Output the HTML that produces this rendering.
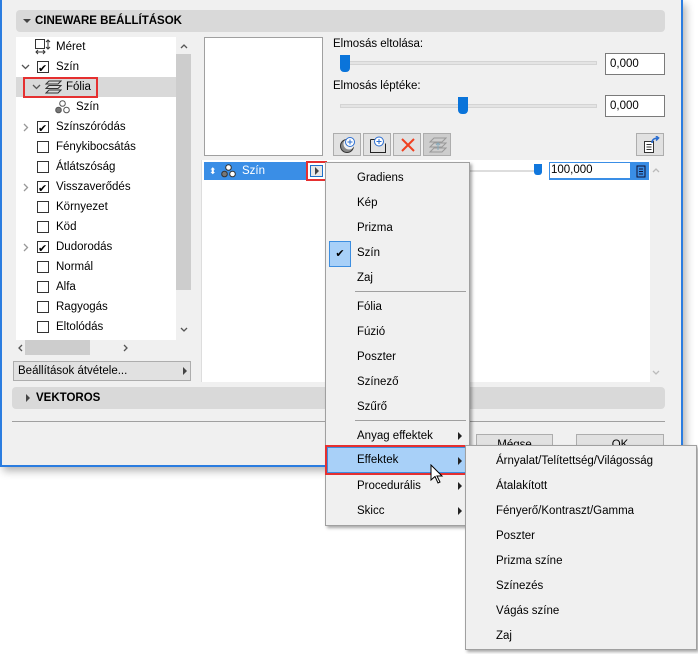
<!DOCTYPE html>
<html><head><meta charset="utf-8"><style>
*{box-sizing:border-box;margin:0;padding:0}
body{width:698px;height:654px;background:#fff;font-family:"Liberation Sans",sans-serif;font-size:11.5px;color:#000;position:relative;overflow:hidden}
.a{position:absolute}
.dlg{left:0;top:0;width:683px;height:467px;background:#f0f0f0;border:2px solid #2b7de0;border-top:none;box-shadow:3px 4px 8px rgba(0,0,0,.3)}
.bar{background:#d9d9d9;border-radius:4px;font-weight:bold;font-size:11.5px}
.tri-d{width:0;height:0;border-left:4px solid transparent;border-right:4px solid transparent;border-top:4px solid #444}
.tri-r{width:0;height:0;border-top:4px solid transparent;border-bottom:4px solid transparent;border-left:4px solid #444}
.cb{width:12px;height:12px;border:1px solid #333;background:#fff}
.cb.c::after{content:"✔";position:absolute;left:0px;top:-3px;font-size:11px}
.row{position:absolute;left:0;width:160px;height:20px;line-height:20px}
.inp{background:#fff;border:1px solid #7a7a7a;height:22px;line-height:20px;padding-left:4px}
.btn{background:#e1e1e1;border:1px solid #adadad}
.menu{background:#f0f0f0;border:1px solid #a0a0a0;box-shadow:2px 2px 3px rgba(0,0,0,.35)}
.mi{position:absolute;height:25px;line-height:25px}
.sep{position:absolute;height:1px;background:#a0a0a0}
.arr{position:absolute;width:0;height:0;border-top:4px solid transparent;border-bottom:4px solid transparent;border-left:4px solid #222}
svg{position:absolute}
</style></head><body>
<div class="a dlg"></div>
<div class="a bar" style="left:16px;top:10px;width:649px;height:22px;line-height:22px;padding-left:19px">CINEWARE BEÁLLÍTÁSOK</div>
<div class="a tri-d" style="left:23px;top:19px"></div>

<!-- tree -->
<div class="a" style="left:16px;top:37px;width:160px;height:303px;background:#fff;overflow:hidden">
 <div class="a" style="left:0;top:40px;width:160px;height:20px;background:#d9d9d9"></div>
 <div class="row" style="top:0"><svg style="left:19px;top:2px" width="16" height="16" viewBox="0 0 16 16"><rect x="0.5" y="0.5" width="9" height="9" fill="none" stroke="#333"/><path d="M13 1v9M11 3l2-2 2 2M11 8l2 2 2-2M1 13h9M3 11l-2 2 2 2M8 11l2 2-2 2" fill="none" stroke="#333"/></svg><span class="a" style="left:40px">Méret</span></div>
 <div class="row" style="top:20px"><svg style="left:5px;top:7px" width="9" height="6"><path d="M1 1l3.5 3.5L8 1" fill="none" stroke="#555" stroke-width="1.3"/></svg><span class="a cb c" style="left:21px;top:4px"></span><span class="a" style="left:40px">Szín</span></div>
 <div class="row" style="top:40px"><svg style="left:16px;top:7px" width="9" height="6"><path d="M1 1l3.5 3.5L8 1" fill="none" stroke="#555" stroke-width="1.3"/></svg><svg style="left:29px;top:3px" width="17" height="14" viewBox="0 0 17 14"><path d="M4 1h12l-3 3H1zM4 5.5h12l-3 3H1zM4 10h12l-3 3H1z" fill="none" stroke="#333"/></svg><span class="a" style="left:50px">Fólia</span></div>
 <div class="row" style="top:60px"><svg style="left:39px;top:3px" width="15" height="14" viewBox="0 0 15 14"><circle cx="7.5" cy="3.5" r="2.8" fill="#fff" stroke="#555"/><circle cx="3.5" cy="10" r="2.8" fill="#777" stroke="#555"/><circle cx="11.5" cy="10" r="2.8" fill="#fff" stroke="#555"/></svg><span class="a" style="left:60px">Szín</span></div>
 <div class="row" style="top:80px"><svg style="left:7px;top:6px" width="6" height="9"><path d="M1 1l3.5 3.5L1 8" fill="none" stroke="#999" stroke-width="1.3"/></svg><span class="a cb c" style="left:21px;top:4px"></span><span class="a" style="left:40px">Színszóródás</span></div>
 <div class="row" style="top:100px"><span class="a cb" style="left:21px;top:4px"></span><span class="a" style="left:40px">Fénykibocsátás</span></div>
 <div class="row" style="top:120px"><span class="a cb" style="left:21px;top:4px"></span><span class="a" style="left:40px">Átlátszóság</span></div>
 <div class="row" style="top:140px"><svg style="left:7px;top:6px" width="6" height="9"><path d="M1 1l3.5 3.5L1 8" fill="none" stroke="#999" stroke-width="1.3"/></svg><span class="a cb c" style="left:21px;top:4px"></span><span class="a" style="left:40px">Visszaverődés</span></div>
 <div class="row" style="top:160px"><span class="a cb" style="left:21px;top:4px"></span><span class="a" style="left:40px">Környezet</span></div>
 <div class="row" style="top:180px"><span class="a cb" style="left:21px;top:4px"></span><span class="a" style="left:40px">Köd</span></div>
 <div class="row" style="top:200px"><svg style="left:7px;top:6px" width="6" height="9"><path d="M1 1l3.5 3.5L1 8" fill="none" stroke="#999" stroke-width="1.3"/></svg><span class="a cb c" style="left:21px;top:4px"></span><span class="a" style="left:40px">Dudorodás</span></div>
 <div class="row" style="top:220px"><span class="a cb" style="left:21px;top:4px"></span><span class="a" style="left:40px">Normál</span></div>
 <div class="row" style="top:240px"><span class="a cb" style="left:21px;top:4px"></span><span class="a" style="left:40px">Alfa</span></div>
 <div class="row" style="top:260px"><span class="a cb" style="left:21px;top:4px"></span><span class="a" style="left:40px">Ragyogás</span></div>
 <div class="row" style="top:280px"><span class="a cb" style="left:21px;top:4px"></span><span class="a" style="left:40px">Eltolódás</span></div>
</div>
<div class="a" style="left:23px;top:77px;width:75px;height:21px;border:2px solid #e53030"></div>
<div class="a" style="left:176px;top:37px;width:15px;height:303px;background:#f0f0f0"></div>
<div class="a" style="left:176px;top:54px;width:15px;height:236px;background:#cdcdcd"></div>
<svg style="left:180px;top:43px" width="8" height="6"><path d="M1 5l3-3 3 3" fill="none" stroke="#555" stroke-width="1.3"/></svg>
<svg style="left:180px;top:327px" width="8" height="6"><path d="M1 1l3 3 3-3" fill="none" stroke="#555" stroke-width="1.3"/></svg>
<div class="a" style="left:16px;top:340px;width:160px;height:15px;background:#f0f0f0"></div>
<div class="a" style="left:25px;top:340px;width:65px;height:15px;background:#cdcdcd"></div>
<svg style="left:17px;top:344px" width="6" height="8"><path d="M5 1l-3 3 3 3" fill="none" stroke="#555" stroke-width="1.3"/></svg>
<svg style="left:123px;top:344px" width="6" height="8"><path d="M1 1l3 3-3 3" fill="none" stroke="#555" stroke-width="1.3"/></svg>
<div class="a btn" style="left:13px;top:361px;width:178px;height:20px;line-height:18px;padding-left:4px">Beállítások átvétele...</div>
<div class="a tri-r" style="left:183px;top:367px"></div>

<!-- preview & list -->
<div class="a" style="left:204px;top:37px;width:119px;height:119px;background:#fff;border:1px solid #a0a0a0"></div>
<div class="a" style="left:201px;top:160px;width:449px;height:222px;background:#fff;border-left:1px solid #ddd"></div>
<div class="a" style="left:204px;top:162px;width:122px;height:18px;background:#3a8ee6;color:#fff;line-height:18px"><span class="a" style="left:5px;font-size:9px">⬍</span><svg style="left:17px;top:2px" width="15" height="14" viewBox="0 0 15 14"><circle cx="7.5" cy="3.5" r="2.8" fill="#fff" stroke="#333"/><circle cx="3.5" cy="10" r="2.8" fill="#777" stroke="#333"/><circle cx="11.5" cy="10" r="2.8" fill="#fff" stroke="#333"/></svg><span class="a" style="left:38px">Szín</span></div>
<div class="a" style="left:306px;top:161px;width:21px;height:20px;border:2px solid #e53030;background:#fff"><div class="a" style="left:2px;top:2px;width:13px;height:12px;border:1px solid #1e6fc8;background:#e8e8e8"></div><div class="arr" style="left:7px;top:4px;border-left-color:#444"></div></div>
<div class="a" style="left:470px;top:170px;width:70px;height:2px;background:#ddd"></div>
<div class="a" style="left:534px;top:164px;width:8px;height:11px;background:#1177dd;border-radius:0 0 3px 3px"></div>
<div class="a" style="left:549px;top:162px;width:100px;height:18px;background:#3a8ee6"></div>
<div class="a" style="left:550px;top:163px;width:80px;height:15px;background:#fff;line-height:15px;padding-left:1px">100,000</div>
<svg style="left:633px;top:163px" width="14" height="15" viewBox="0 0 14 15"><rect x="4" y="3" width="8" height="11" fill="none" stroke="#113"/><path d="M6 6h4M6 8.5h4M6 11h4" stroke="#113"/></svg>
<svg style="left:652px;top:167px" width="8" height="6"><path d="M1 5l3-3 3 3" fill="none" stroke="#bbb" stroke-width="1.3"/></svg>
<svg style="left:652px;top:370px" width="8" height="6"><path d="M1 1l3 3 3-3" fill="none" stroke="#bbb" stroke-width="1.3"/></svg>

<div class="a" style="left:333px;top:38px">Elmosás eltolása:</div>
<div class="a" style="left:340px;top:61px;width:257px;height:4px;background:#e4e4e4;border:1px solid #d4d4d4"></div>
<div class="a" style="left:340px;top:55px;width:10px;height:17px;background:#0a74da;border-radius:0 0 4px 4px"></div>
<div class="a inp" style="left:605px;top:53px;width:60px">0,000</div>
<div class="a" style="left:333px;top:80px">Elmosás léptéke:</div>
<div class="a" style="left:340px;top:104px;width:257px;height:4px;background:#e4e4e4;border:1px solid #d4d4d4"></div>
<div class="a" style="left:458px;top:97px;width:10px;height:17px;background:#0a74da;border-radius:0 0 4px 4px"></div>
<div class="a inp" style="left:605px;top:95px;width:60px">0,000</div>

<div class="a btn" style="left:333px;top:133px;width:28px;height:23px"><svg style="left:5px;top:2px" width="18" height="18" viewBox="0 0 18 18"><circle cx="8" cy="10" r="6.5" fill="#888" stroke="#333"/><circle cx="10" cy="8" r="5.5" fill="#f0f0f0"/><circle cx="11" cy="6" r="4.5" fill="#fff" stroke="#2a6dd0"/><path d="M11 3.5v5M8.5 6h5" stroke="#2a6dd0"/></svg></div>
<div class="a btn" style="left:363px;top:133px;width:28px;height:23px"><svg style="left:5px;top:2px" width="18" height="18" viewBox="0 0 18 18"><path d="M1.5 3.5v13h15v-9" fill="none" stroke="#222"/><path d="M1.5 3.5h4" stroke="#222"/><circle cx="10" cy="5.5" r="4.5" fill="#fff" stroke="#2a6dd0"/><path d="M10 3v5M7.5 5.5h5" stroke="#2a6dd0"/></svg></div>
<div class="a btn" style="left:393px;top:133px;width:28px;height:23px"><svg style="left:7px;top:4px" width="14" height="14" viewBox="0 0 14 14"><path d="M1 1l12 12M13 1L1 13" stroke="#f04020" stroke-width="2"/></svg></div>
<div class="a btn" style="left:423px;top:133px;width:28px;height:23px;background:#cdcdcd"><svg style="left:5px;top:3px" width="18" height="16" viewBox="0 0 18 16"><path d="M5 1h12l-4 4H1zM5 6h12l-4 4H1zM5 11h12l-4 4H1z" fill="none" stroke="#999"/><path d="M9 13V6M7 8l2-2 2 2" stroke="#8ab" fill="none"/></svg></div>
<div class="a btn" style="left:636px;top:133px;width:28px;height:23px"><svg style="left:6px;top:2px" width="18" height="18" viewBox="0 0 18 18"><rect x="1.5" y="5.5" width="9" height="11" fill="#fff" stroke="#333"/><path d="M3.5 8.5h5M3.5 11h5M3.5 13.5h5" stroke="#333"/><path d="M9 7c0-4 3-5 6-5M13 0l2.5 2L13 4.5" fill="none" stroke="#2a6dd0" stroke-width="1.6"/></svg></div>

<div class="a bar" style="left:12px;top:387px;width:653px;height:22px;line-height:22px;padding-left:24px">VEKTOROS</div>
<div class="a tri-r" style="left:26px;top:394px"></div>
<div class="a" style="left:12px;top:421px;width:653px;height:1px;background:#a0a0a0"></div>
<div class="a btn" style="left:476px;top:434px;width:77px;height:23px;text-align:center;line-height:21px">Mégse</div>
<div class="a btn" style="left:576px;top:434px;width:88px;height:23px;text-align:center;line-height:21px">OK</div>

<!-- menu -->
<div class="a menu" style="left:325px;top:162px;width:145px;height:364px"></div>
<div class="a" style="left:329px;top:241px;width:22px;height:26px;background:#a8d0f8;border:1px solid #3d8ee0;text-align:center;line-height:24px;font-size:11px">✔</div>
<div class="mi" style="left:357px;top:166px">Gradiens</div>
<div class="mi" style="left:357px;top:191px">Kép</div>
<div class="mi" style="left:357px;top:216px">Prizma</div>
<div class="mi" style="left:357px;top:241px">Szín</div>
<div class="mi" style="left:357px;top:266px">Zaj</div>
<div class="sep" style="left:355px;top:291px;width:111px"></div>
<div class="mi" style="left:357px;top:295px">Fólia</div>
<div class="mi" style="left:357px;top:320px">Fúzió</div>
<div class="mi" style="left:357px;top:345px">Poszter</div>
<div class="mi" style="left:357px;top:370px">Színező</div>
<div class="mi" style="left:357px;top:395px">Szűrő</div>
<div class="sep" style="left:355px;top:420px;width:111px"></div>
<div class="mi" style="left:357px;top:424px">Anyag effektek</div>
<div class="arr" style="left:458px;top:432px"></div>
<div class="a" style="left:325px;top:445px;width:144px;height:30px;border:2px solid #e53030"></div>
<div class="a" style="left:327px;top:447px;width:140px;height:26px;background:#a8d0f8;border:1px solid #3d8ee0"></div>
<div class="mi" style="left:357px;top:448px">Effektek</div>
<div class="arr" style="left:458px;top:457px"></div>
<div class="mi" style="left:357px;top:474px">Procedurális</div>
<div class="arr" style="left:458px;top:482px"></div>
<div class="mi" style="left:357px;top:499px">Skicc</div>
<div class="arr" style="left:458px;top:507px"></div>
<svg style="left:430px;top:464px" width="14" height="22" viewBox="0 0 14 22"><path d="M1 1 L1 16 L5 12.5 L8 19 L10 18 L7 12 L12 12 Z" fill="#fff" stroke="#000" stroke-width="1"/></svg>

<!-- submenu -->
<div class="a menu" style="left:465px;top:445px;width:232px;height:205px"></div>
<div class="mi" style="left:496px;top:449px">Árnyalat/Telítettség/Világosság</div>
<div class="mi" style="left:496px;top:474px">Átalakított</div>
<div class="mi" style="left:496px;top:499px">Fényerő/Kontraszt/Gamma</div>
<div class="mi" style="left:496px;top:524px">Poszter</div>
<div class="mi" style="left:496px;top:549px">Prizma színe</div>
<div class="mi" style="left:496px;top:574px">Színezés</div>
<div class="mi" style="left:496px;top:599px">Vágás színe</div>
<div class="mi" style="left:496px;top:624px">Zaj</div>
</body></html>
